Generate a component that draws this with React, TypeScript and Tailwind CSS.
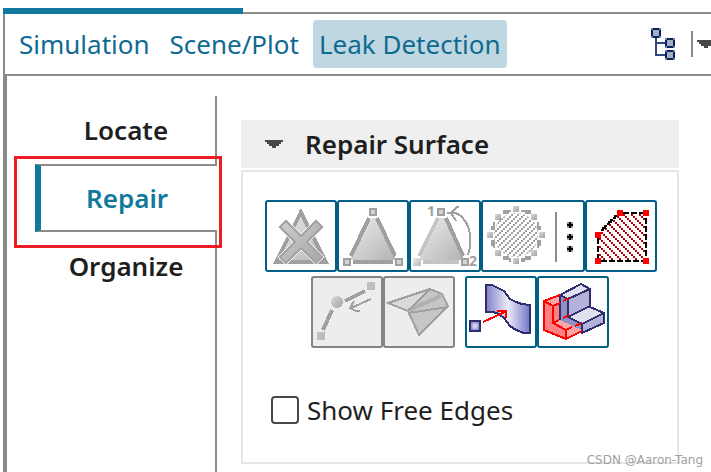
import type { ReactNode } from "react";

const EDGE = "#a0a0a0";
const NAVY = "#2e2e6e";

function hatch(size: number, step: number, rising: boolean): string {
  let d = "";
  for (let o = -size - (size % step); o < size * 2; o += step) {
    for (let i = 0; i < size; i++) {
      const x = rising ? o + size - i : o + i;
      if (x >= 0 && x < size) d += `M${x} ${i}h1v1h-1z`;
    }
  }
  return d;
}

function Gradients() {
  return (
    <svg className="absolute size-0" aria-hidden="true">
      <defs>
        <linearGradient id="grey" x1="0" y1="0" x2="1" y2="1">
          <stop offset="0" stopColor="#ececec" />
          <stop offset="1" stopColor="#b4b4b4" />
        </linearGradient>
        <linearGradient id="cross" x1="0" y1="0" x2="1" y2="1">
          <stop offset="0" stopColor="#cfcfcf" />
          <stop offset="1" stopColor="#a6a6a6" />
        </linearGradient>
        <linearGradient id="knob" x1="0" y1="0" x2="1" y2="1">
          <stop offset="0" stopColor="#dadada" />
          <stop offset="1" stopColor="#a2a2a2" />
        </linearGradient>
        <linearGradient id="sheet" x1="0" y1="0" x2="1" y2="0">
          <stop offset="0" stopColor="#8080c8" />
          <stop offset="0.5" stopColor="#ececf8" />
          <stop offset="1" stopColor="#7474c8" />
        </linearGradient>
        <radialGradient id="cell">
          <stop offset="0" stopColor="#e8e8f6" />
          <stop offset="1" stopColor="#8888c8" />
        </radialGradient>
      </defs>
    </svg>
  );
}

function Icon({ wide = false, children }: { wide?: boolean; children: ReactNode }) {
  return (
    <svg
      viewBox={wide ? "0 0 50 34" : "0 0 34 34"}
      className={wide ? "h-[68px] w-[100px]" : "size-[68px]"}
      shapeRendering="crispEdges"
      fill="none"
      aria-hidden="true"
    >
      {children}
    </svg>
  );
}

function Handle({ x, y }: { x: number; y: number }) {
  return <rect x={x + 0.5} y={y + 0.5} width="3" height="3" fill="#d4d4d4" stroke={EDGE} />;
}

function DeleteFaceIcon() {
  return (
    <Icon>
      <path d="M17 5 4.500 30h25z" fill="url(#grey)" stroke={EDGE} strokeWidth="2" />
      <path
        d="M9.500 9.500 17 17 24.500 9.500 27.500 12.500 20 20 27.500 27.500 24.500 30.500 17 23 9.500 30.500 6.500 27.500 14 20 6.500 12.500z"
        stroke="#f4f4f4"
        strokeWidth="2"
      />
      <path
        d="M9.500 9.500 17 17 24.500 9.500 27.500 12.500 20 20 27.500 27.500 24.500 30.500 17 23 9.500 30.500 6.500 27.500 14 20 6.500 12.500z"
        fill="url(#cross)"
        stroke="#a4a4a4"
      />
    </Icon>
  );
}

function FillTriangleIcon() {
  return (
    <Icon>
      <path d="M16 8h2l10 19v2H6v-2z" fill="url(#grey)" />
      <path d="M15 8 6 27M19 8l9 19" stroke={EDGE} strokeWidth="2" />
      <path d="M7 29h20v2H7z" fill={EDGE} />
      <Handle x={15} y={3} />
      <Handle x={2} y={28} />
      <Handle x={28} y={28} />
    </Icon>
  );
}

function SwapVertexIcon() {
  return (
    <Icon>
      <path d="M14 8h3l9 19v2H5v-2z" fill="url(#grey)" />
      <path d="M13.500 8 4 27" stroke="#c4c4c4" strokeWidth="2" />
      <path d="M17.500 8 26 27" stroke={EDGE} strokeWidth="2" />
      <path d="M6 29h18v2H6z" fill="#c4c4c4" />
      <path d="M1 28h4v4H1z" fill="url(#grey)" />
      <Handle x={13} y={3} />
      <Handle x={25} y={28} />
      <path d="M18 5.500h4c4 1 7 6 7.500 11 .5 4 0 7-1 10" stroke={EDGE} />
      <path d="M24 2.500h-1l-3 3 2.500 4" stroke={EDGE} />
      <text x="8" y="7" fontSize="7" className="font-sans font-bold" fill={EDGE}>1</text>
      <text x="29" y="32" fontSize="7" className="font-sans font-bold" fill={EDGE}>2</text>
    </Icon>
  );
}

function FillHoleIcon() {
  const knobs = [[15, 2], [24, 6], [28, 15], [24, 24], [15, 28], [6, 24], [2, 15], [6, 6]];
  return (
    <Icon wide>
      <clipPath id="disc">
        <circle cx="16.500" cy="16.500" r="11" />
      </clipPath>
      <path d={hatch(34, 3, true)} fill={EDGE} clipPath="url(#disc)" />
      <path
        d="M10 4h4v1h-1v1h-3zM19 4h1v0h4v2h-3V5h-2zM27 10h1v2h1v2h-2zM27 19h2v3h-1v1h-1zM19 28h2v-1h3v2h-3v1h-2zM10 27h3v1h1v2h-1v-1h-3zM4 19h2v4H5v-1H4zM4 12h1v-2h1v4H4z"
        fill={EDGE}
      />
      {knobs.map(([x, y]) => (
        <path key={`${x}-${y}`} d={`M${x} ${y}h3v3h-3z`} fill="url(#knob)" />
      ))}
      <path d="M36 5h1v25h-1z" fill="#8c8c8c" />
      {[10, 16, 22].map((y) => (
        <g key={y}>
          <path d={`M42 ${y}h3v3h-3z`} fill="#999" />
          <path d={`M43 ${y}h1v3h-1zM42 ${y + 1}h3v1h-3z`} fill="#000" />
        </g>
      ))}
    </Icon>
  );
}

function FillPolygonIcon() {
  return (
    <Icon>
      <clipPath id="patch">
        <path d="M16 6h13v23H6V16z" />
      </clipPath>
      <path d={hatch(34, 4, false)} fill="#b40000" clipPath="url(#patch)" />
      <path d="M18 5.500h10M29.500 8v20M7 29.500h21M5.500 18v10" stroke="#000" strokeDasharray="3 1" />
      <path d="M7 14h1v-1h1v-1h1M10 11h1v-1h1V9h1M13 8h1V7h1" stroke="#000" />
      <path d="M15 4h3v3h-3zM28 4h3v3h-3zM4 15h3v3H4zM4 28h3v3H4zM28 28h3v3h-3z" fill="#f00" />
    </Icon>
  );
}

function MoveVertexIcon() {
  return (
    <Icon>
      <path d="M16 11.500 26 6.500M9.500 16 5 26" stroke={EDGE} strokeWidth="2" />
      <path d="M27 2h4v4h-4zM2 27h4v4H2z" fill="url(#knob)" />
      <circle cx="12" cy="12" r="3" fill="url(#knob)" />
      <path d="m29 10.500-10 4.500M20.500 11.500 18.500 15l3 1.500h2" stroke={EDGE} />
    </Icon>
  );
}

function FoldFacesIcon() {
  return (
    <Icon>
      <path d="M1.500 12.500 22.500 5.500 11.500 16.500z" fill="#dadada" />
      <path d="M22.500 5.500 28.500 8 31.500 14 17 28.500 11.500 16.500z" fill="#c6c6c6" />
      <path d="M12 16 28 9" stroke="#b0b0b0" strokeWidth="2" />
      <path
        d="M1.500 12.500 22.500 5.500 28.500 8l3 6L17 28.500l-5.500-12zM11.500 16.500l11-11M11.500 17.500 31.500 14.500"
        stroke={EDGE}
      />
    </Icon>
  );
}

function ProjectVertexIcon() {
  return (
    <Icon>
      <path
        d="M9.500 3.500h3l4 2 2 1 3 4 3 1.500 3 1 4 .5v14h-3l-4-1.500-3-2-3-4-3.500-2.500-2.500-.5h-3z"
        fill="url(#sheet)"
        stroke={NAVY}
      />
      <rect x="1.500" y="21.500" width="5" height="5" fill="url(#cell)" stroke={NAVY} />
      <path d="m8 22 11-5M15 16.500h4.500V20" stroke="#f00" />
    </Icon>
  );
}

function CoincidentPartsIcon() {
  return (
    <Icon>
      <path d="M10.500 8.500 21 3l4.500 2.500-11 5z" fill="#e0e0ee" />
      <path d="m14.500 10.500 11-5v9l-11 5z" fill="#b2b2da" />
      <path d="m14.500 19.500 11-5.500 7 3.500-11 5.500z" fill="#e0e0ee" />
      <path d="m21.500 23 11-5.500v5l-11 5z" fill="#b2b2da" />
      <path d="m10.500 8.500 4 2v9l7 3.500v4.500l-11-6z" fill="#9090c6" />
      <path d="m2.500 11.500 8-3v13l11 5.500-8 4-11-5z" fill="#ff8080" />
      <path d="m2.500 11.500 8-3v4l-4 2zM7 22.500l3.500-1.500 11 5-8 5v-5z" fill="#ffa4a4" />
      <path
        d="M10.500 21V8.500L21 3l4.500 2.500v9l7 3v5l-11 5V23l11-5.500M10.500 8.500l4 2v9L21.500 23M14.500 10.500l11-5M14.500 19.500l11-5.500"
        stroke={NAVY}
      />
      <path
        d="M10.500 8.500l-8 3V26l11 4.500 8-4M2.500 11.500 7 14v8.500l6.500 3.500v4.500M13.500 26l3-1.500M18 24l3.500-1.500M7 14l3.500-1.500M12 11.500l3-1.500M7 22.500l3-1.500M12 20l3-1.500"
        stroke="#f00"
      />
    </Icon>
  );
}

function TreeIcon() {
  return (
    <svg viewBox="0 0 12 16" className="h-8 w-6" fill="none" aria-hidden="true" shapeRendering="crispEdges">
      <path d="M2.500 5v8.500H7M2.500 7.500H7" stroke="#2d4878" />
      {[[0, 0], [7, 5], [7, 11]].map(([x, y]) => (
        <g key={`${x}-${y}`}>
          <path d={`M${x} ${y}h5v5h-5z`} fill="#6d80a6" />
          <path d={`M${x + 1} ${y}h3v1h1v3h-1v1h-3v-1h-1v-3h1z`} fill="#082258" />
          <path d={`M${x + 1} ${y + 1}h3v3h-3z`} fill="#a3aec6" />
        </g>
      ))}
    </svg>
  );
}

function Caret() {
  return (
    <svg viewBox="0 0 18 8" className="h-2 w-[18px] shrink-0" fill="#484848" aria-hidden="true" shapeRendering="crispEdges">
      <path d="M0 0h18v2h-2v2h-2v2h-3v2H7V6H4V4H2V2H0z" />
    </svg>
  );
}

type ToolProps = { label: string; disabled?: boolean; children: ReactNode };

function Tool({ label, disabled = false, children }: ToolProps) {
  return (
    <button
      type="button"
      aria-label={label}
      disabled={disabled}
      className="shrink-0 rounded-[3px] border-2 border-[#005f87] bg-white disabled:border-[#858585] disabled:bg-[#ededed]"
    >
      {children}
    </button>
  );
}

function ViewTab({ label, active = false }: { label: string; active?: boolean }) {
  return (
    <button
      type="button"
      aria-pressed={active}
      className={
        active
          ? "h-12 rounded bg-[#bfd7e0] px-1.5 whitespace-nowrap"
          : "h-12 rounded px-1.5 whitespace-nowrap"
      }
    >
      {label}
    </button>
  );
}

export default function App() {
  return (
    <div className="relative flex min-h-screen flex-col overflow-hidden bg-white pt-2 pl-[3px] font-['Noto_Sans',sans-serif] text-[26px] text-[#1f1f1f]">
      <Gradients />
      <div className="flex items-end">
        <div className="h-1.5 w-60 bg-[#11799c]" />
        <div className="h-0.5 flex-1 bg-[#8b8b8b]" />
      </div>

      <header className="flex h-[62px] items-center border-b-2 border-l-2 border-[#8b8b8b] pl-2">
        <nav className="flex gap-2 text-[#0f6a92]">
          <ViewTab label="Simulation" />
          <ViewTab label="Scene/Plot" />
          <ViewTab label="Leak Detection" active />
        </nav>
        <div className="ml-auto flex shrink-0 items-center">
          <button type="button" aria-label="Show tree">
            <TreeIcon />
          </button>
          <div className="ml-4 h-[26px] w-0.5 bg-[#8b8b8b]" />
          <button type="button" aria-label="More views" className="ml-1 w-3.5 overflow-hidden">
            <Caret />
          </button>
        </div>
      </header>

      <div className="flex flex-1 border-l-4 border-[#8b8b8b]">
        <nav className="flex w-[210px] shrink-0 flex-col pt-5 font-semibold">
          <button type="button" className="h-[68px] border-r-2 border-[#8b8b8b] pl-[30px]">
            Locate
          </button>
          <div className="relative ml-7">
            <button
              type="button"
              aria-current="true"
              className="h-[68px] w-full border-y-2 border-l-6 border-y-[#8b8b8b] border-l-[#11799c] pr-1 text-[#11799c]"
            >
              Repair
            </button>
            <div className="pointer-events-none absolute -top-2 -right-[5px] -bottom-4 -left-[21px] border-3 border-[#ed1c24]" />
          </div>
          <button type="button" className="h-[68px] border-r-2 border-[#8b8b8b] pl-[30px]">
            Organize
          </button>
          <div className="flex-1 border-r-2 border-[#8b8b8b]" />
        </nav>

        <main className="min-w-0 flex-1 pt-11 pr-8 pb-2 pl-6">
          <button type="button" aria-expanded="true" className="flex h-12 w-full items-center gap-[22px] bg-[#efefef] pl-6 font-semibold">
            <Caret />
            <span>Repair Surface</span>
          </button>
          <section className="mt-0.5 border-2 border-[#e5e5e5] pt-7 pb-[34px]">
            <div className="flex pl-[22px]">
              <Tool label="Delete faces"><DeleteFaceIcon /></Tool>
              <Tool label="Create face"><FillTriangleIcon /></Tool>
              <Tool label="Swap vertices"><SwapVertexIcon /></Tool>
              <Tool label="Fill holes"><FillHoleIcon /></Tool>
              <Tool label="Fill polygon"><FillPolygonIcon /></Tool>
            </div>
            <div className="mt-1 flex justify-center gap-2.5">
              <div className="flex">
                <Tool label="Move vertex" disabled><MoveVertexIcon /></Tool>
                <Tool label="Fold faces" disabled><FoldFacesIcon /></Tool>
              </div>
              <div className="flex">
                <Tool label="Project vertex"><ProjectVertexIcon /></Tool>
                <Tool label="Coincident parts"><CoincidentPartsIcon /></Tool>
              </div>
            </div>
            <label className="mt-11 ml-7 flex h-9 w-fit items-center gap-2">
              <input
                type="checkbox"
                className="size-7 appearance-none rounded border-2 border-[#484848] bg-white checked:bg-[#11799c]"
              />
              <span>Show Free Edges</span>
            </label>
          </section>
        </main>
      </div>

      <div className="absolute right-2 bottom-1 font-['DejaVu_Sans',sans-serif] text-xs leading-4 text-[#a0a0a0]">CSDN @Aaron-Tang</div>
    </div>
  );
}
